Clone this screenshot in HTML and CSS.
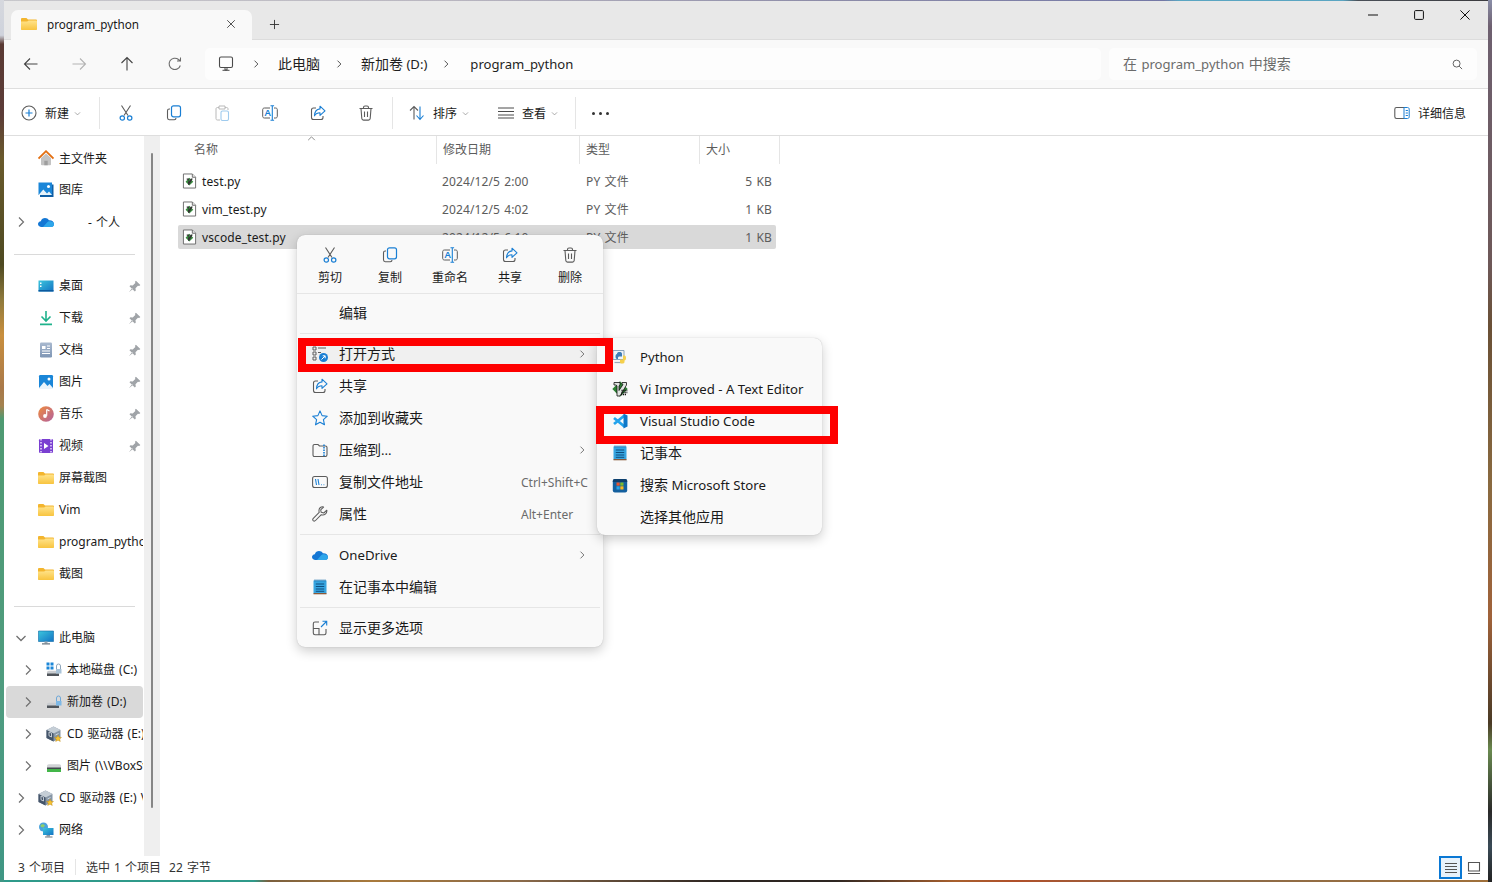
FILE: index.html
```html
<!DOCTYPE html>
<html lang="zh-CN">
<head>
    <meta charset="UTF-8">
    <title>program_python - File Explorer</title>
    <link rel="stylesheet" href="styles.css">
</head>
<body>
    <!-- shared icons -->
    <svg class="defs" aria-hidden="true">
        <defs>
            <linearGradient id="g-folder" x1="0" y1="0" x2="0" y2="1"><stop offset="0" stop-color="#ffe38a"/><stop offset="1" stop-color="#f8c43f"/></linearGradient>
            <linearGradient id="g-screen" x1="0" y1="0" x2="1" y2="1"><stop offset="0" stop-color="#3cc6dd"/><stop offset="1" stop-color="#1273c4"/></linearGradient>
            <linearGradient id="g-music" x1="0" y1="0" x2="1" y2="1"><stop offset="0" stop-color="#ef8b3c"/><stop offset="1" stop-color="#b2609f"/></linearGradient>
            <linearGradient id="g-doc" x1="0" y1="0" x2="0" y2="1"><stop offset="0" stop-color="#a9b9cf"/><stop offset="1" stop-color="#7f96b5"/></linearGradient>

            <symbol id="i-folder" viewBox="0 0 16 16"><path d="M0 3.2C0 2.5.5 2 1.2 2h4.2l1.6 1.6h7.8c.7 0 1.2.5 1.2 1.2v8c0 .7-.5 1.2-1.2 1.2H1.2C.5 14 0 13.5 0 12.8z" fill="#f3b52e"/><path d="M0 5.6h6.2L7.6 4.6h7.2c.7 0 1.2.5 1.2 1.2v7c0 .7-.5 1.2-1.2 1.2H1.2C.5 14 0 13.5 0 12.8z" fill="url(#g-folder)"/></symbol>
            <symbol id="i-chev-r" viewBox="0 0 16 16"><path d="M6 3.500 10.500 8 6 12.500" fill="none" stroke="currentColor" stroke-width="1.200"/></symbol>
            <symbol id="i-chev-d" viewBox="0 0 16 16"><path d="M3.500 6 8 10.500 12.500 6" fill="none" stroke="currentColor" stroke-width="1.300"/></symbol>
            <symbol id="i-pin" viewBox="0 0 16 16"><path d="M9.800 .8 15.200 6.200 13.800 7.400 12.200 7 9.200 10.200 9.600 13 8.400 14.200 1.800 7.600 3 6.400 5.800 6.800 9 3.800 8.600 2.200z M5 10 1 15 6 11z" fill="#a0a4a8"/></symbol>

            <symbol id="i-cut" viewBox="0 0 16 16"><path d="M3.500 .5 10 10.500M12.500 .5 6 10.500" fill="none" stroke="#5c5c5c" stroke-width="1.100"/><circle cx="4.300" cy="13" r="2.200" fill="none" stroke="#1a7fd4" stroke-width="1.200"/><circle cx="11.700" cy="13" r="2.200" fill="none" stroke="#1a7fd4" stroke-width="1.200"/></symbol>
            <symbol id="i-copy" viewBox="0 0 16 16"><path d="M4 4H3.200C2 4 1.500 4.800 1.500 5.800v7C1.500 14 2.300 14.700 3.300 14.700h5c1 0 1.700-.6 1.700-1.700" fill="none" stroke="#5c5c5c" stroke-width="1.100"/><rect x="5.500" y=".8" width="9" height="11" rx="2" fill="none" stroke="#1a7fd4" stroke-width="1.200"/></symbol>
            <symbol id="i-paste" viewBox="0 0 16 16"><path d="M5 2.500H3.500C2.500 2.500 2 3 2 4v9.500c0 1 .5 1.500 1.500 1.500H6M5 1h6v3H5zM11 2.500h1.500c1 0 1.500.5 1.500 1.500v1" fill="none" stroke="#b9b9b9" stroke-width="1"/><rect x="7" y="6" width="7.500" height="9.500" rx="1.500" fill="none" stroke="#9fcbee" stroke-width="1.100"/></symbol>
            <symbol id="i-rename" viewBox="0 0 16 16"><path d="M8 3H2.500C1.300 3 .7 3.700 .7 4.500v7c0 .8.600 1.500 1.800 1.500H8M12 3h1.500c1.200 0 1.800.7 1.800 1.500v7c0 .8-.6 1.500-1.800 1.500H12" fill="none" stroke="#5c5c5c" stroke-width="1"/><path d="M8.500 .8h3.600M10.300 .8v14.400M8.500 15.200h3.600" fill="none" stroke="#1a7fd4" stroke-width="1.100"/><text x="2.600" y="11" class="svg-letter">A</text></symbol>
            <symbol id="i-share" viewBox="0 0 16 16"><path d="M6 3H3.500C2.300 3 1.500 3.800 1.500 5v7.500c0 1.200.8 2 2 2H11c1.200 0 2-.8 2-2V11" fill="none" stroke="#5c5c5c" stroke-width="1.100"/><path d="M10 1.200 15 5.800 10 10.300V7.700C7.500 7.700 5.800 8.500 4.500 10.800 4.700 7 6.500 4.200 10 3.900z" fill="none" stroke="#1a7fd4" stroke-width="1.100" stroke-linejoin="round"/></symbol>
            <symbol id="i-trash" viewBox="0 0 16 16"><path d="M1.500 3.500h13M5.500 3.500V2.500C5.500 1.500 6.200 1 7 1h2c.8 0 1.500.5 1.500 1.500v1M3 3.500l.8 10c.1 1 .8 1.600 1.700 1.600h5c.9 0 1.600-.6 1.700-1.600l.8-10M6.500 6.500v5.500M9.500 6.500v5.500" fill="none" stroke="#5c5c5c" stroke-width="1.100"/></symbol>
            <symbol id="i-new" viewBox="0 0 16 16"><circle cx="8" cy="8" r="7" fill="none" stroke="#5c5c5c" stroke-width="1.100"/><path d="M8 4.500v7M4.500 8h7" stroke="#1a7fd4" stroke-width="1.200"/></symbol>
            <symbol id="i-sort" viewBox="0 0 16 16"><path d="M5 14.500V1.500M1 5.500l4-4 4 4" fill="none" stroke="#5c5c5c" stroke-width="1.100"/><path d="M11 1.500v13M7.500 10.500l3.500 4 3.500-4" fill="none" stroke="#1a7fd4" stroke-width="1.100"/></symbol>
            <symbol id="i-view" viewBox="0 0 16 16"><path d="M0 3h16M0 6.500h16M0 10h16M0 13h16" stroke="#4a4a4a" stroke-width="1"/></symbol>
            <symbol id="i-details" viewBox="0 0 16 16"><path d="M10 2.500H2.500C1.500 2.500 .8 3.200 .8 4.200v7.600c0 1 .7 1.700 1.700 1.700H10" fill="none" stroke="#5c5c5c" stroke-width="1.100"/><path d="M10 2.500h3.500c1 0 1.700.7 1.700 1.700v7.600c0 1-.7 1.700-1.700 1.700H10zM11.700 5.500h2.200M11.700 8h2.200M11.700 10.500h2.200" fill="none" stroke="#1a7fd4" stroke-width="1"/></symbol>

            <symbol id="i-openwith" viewBox="0 0 16 16"><path d="M1 1h3v3H1zM1 6h3v3H1zM1 11h3v3H1zM6 2h8M6 6.500h3" fill="none" stroke="#5c5c5c" stroke-width="1"/><circle cx="11.500" cy="11.500" r="4.500" fill="#1a7fd4"/><path d="M9.500 13.500l3.500-3.500M10.700 9.800h2.500v2.500" fill="none" stroke="#fff" stroke-width="1"/></symbol>
            <symbol id="i-star" viewBox="0 0 16 16"><path d="M8 .9 10.100 5.600 15.300 6.200 11.400 9.700 12.500 14.800 8 12.200 3.500 14.800 4.600 9.700 .7 6.200 5.900 5.600z" fill="none" stroke="#1a7fd4" stroke-width="1.100" stroke-linejoin="round"/></symbol>
            <symbol id="i-zip" viewBox="0 0 16 16"><path d="M1 4.200C1 3 1.600 2.500 2.500 2.500H6l1.500 1.500h6c1 0 1.500.6 1.500 1.500v7.300c0 1-.6 1.700-1.500 1.700h-11C1.600 14.500 1 13.800 1 12.800z" fill="none" stroke="#5c5c5c" stroke-width="1.100"/><path d="M12 2.500v12" stroke="#1a7fd4" stroke-width="1.600" stroke-dasharray="1.500 1"/></symbol>
            <symbol id="i-path" viewBox="0 0 16 16"><rect x=".6" y="2.500" width="14.800" height="11" rx="2" fill="none" stroke="#5c5c5c" stroke-width="1.100"/><path d="M3.500 5 4.500 11M6 5 7 11M9 10.800h.8M11.500 10.800h.8" fill="none" stroke="#1a7fd4" stroke-width="1.100"/></symbol>
            <symbol id="i-wrench" viewBox="0 0 16 16"><path d="M14.800 4.200 11.800 7 9.200 6.300 8.700 3.800 11.600 1c-2.300-.7-4.800.8-4.600 4 0 .5.100 1 .2 1.400L1.300 12.300c-.7.700-.7 1.600-.1 2.300.7.600 1.600.6 2.300-.1l5.800-5.800c2.900 1 6-1.200 5.500-4.500z" fill="none" stroke="#5c5c5c" stroke-width="1.050" stroke-linejoin="round"/></symbol>
            <symbol id="i-cloud" viewBox="0 0 16 16"><path d="M3.400 13C1.500 13 0 11.800 0 10.100 0 8.500 1.200 7.400 2.800 7.200 3.500 5.200 5.100 4 7 4c1.700 0 3.100.9 3.900 2.300 2.800-.3 5.100 1.400 5.100 3.700 0 1.800-1.300 3-3.200 3z" fill="#1477d4"/><path d="M5 13 9 8.500c1-1.200 2.600-1.500 4.200-1 1.700.5 2.800 1.500 2.800 2.900 0 1.500-1.200 2.600-3.200 2.600z" fill="#2ea6ea"/></symbol>
            <symbol id="i-notepad" viewBox="0 0 16 16"><path d="M1.500 1.500h13v13h-13z" fill="#37a5e0"/><path d="M1.500 14h13v1.300h-13z" fill="#8a5a3a"/><path d="M3 .5v2M5 .5v2M7 .5v2M9 .5v2M11 .5v2M13 .5v2" stroke="#1b6ca8" stroke-width="1"/><path d="M3.800 5h8.400M3.800 7.500h8.400M3.800 10h8.400M3.800 12.300h8.400" stroke="#0e4f80" stroke-width="1"/></symbol>
            <symbol id="i-more" viewBox="0 0 16 16"><path d="M7 2H3C2 2 1.300 2.700 1.300 3.700V13c0 1 .7 1.700 1.700 1.700h9.300c1 0 1.700-.7 1.700-1.700V9M1.300 8.500H7V14.700" fill="none" stroke="#5c5c5c" stroke-width="1.100"/><path d="M9 7l5.500-5.500M10.500 1.300h4.200v4.200" fill="none" stroke="#1a7fd4" stroke-width="1.100"/></symbol>

            <symbol id="i-python" viewBox="0 0 16 16"><path d="M1 1.500h11v9H1z" fill="#eef3f8" stroke="#8aa3bb" stroke-width="1"/><path d="M2.500 13.500h8" stroke="#9ab" stroke-width="1.200"/><path d="M5 5c0-1.500 1-2 2.500-2s2.500.5 2.500 1.800V7.500H7.500c-1 0-1.500.5-1.500 1.500v1H5C4 10 3.500 9 3.500 7.500S4 5 5 5z" fill="#3f7cb5"/><path d="M11 6.500h1.500c1 0 1.500 1 1.500 2.500s-.5 2.500-1.500 2.500v1.500c0 1-1 1.500-2.500 1.500S8 14 8 13v-2.500h2.500c.5 0 .5-.5.500-1z" fill="#f5d04d"/></symbol>
            <symbol id="i-vim" viewBox="0 0 16 16"><path d="M8 .3 15.700 8 8 15.700.3 8z" fill="#2c7f33"/><path d="M2 1.500h6v2.500L7 4.800v4.700L11 3.500 10 2.800V1.500h4.500v2.500l-6.500 11H5V4.800L4 4H2z" fill="#e2e5e2" stroke="#111" stroke-width=".8"/><path d="M9.500 9.500h6M9.500 11.500h6M9 13.500h5" stroke="#111" stroke-width="1.300" stroke-dasharray="1.200 .7"/></symbol>
            <symbol id="i-vscode" viewBox="0 0 16 16"><path d="M12.500 2.500 2 11M2 5l10.500 8.500" fill="none" stroke="#24a3ec" stroke-width="2.800"/><path d="M11.500 .6 15.500 2.500V13.500L11.500 15.400z" fill="#0f78c8"/></symbol>
            <symbol id="i-store" viewBox="0 0 16 16"><rect x=".8" y="2" width="14.400" height="13.400" rx="2" fill="#14609f"/><path d="M.8 4C.8 2.800 1.600 2 2.800 2h10.400c1.200 0 2 .8 2 2v1H.8z" fill="#0e3f6d"/><path d="M4.500 5.500h3.200v3.200H4.500z" fill="#e9552e"/><path d="M8.300 5.500h3.200v3.200H8.300z" fill="#7fba2a"/><path d="M4.500 9.300h3.200v3.200H4.500z" fill="#29a5e6"/><path d="M8.300 9.300h3.200v3.200H8.300z" fill="#fbb81e"/></symbol>

            <symbol id="i-home" viewBox="0 0 16 16"><path d="M3 8v6.500C3 15 3.400 15.300 4 15.300h8c.6 0 1-.3 1-.8V8L8 3.500z" fill="#c3c3c3"/><path d="M6.300 15.300v-4.500h3.400v4.500z" fill="#9e9e9e"/><path d="M.5 8.500 8 1.200l7.500 7.300" fill="none" stroke="#e36f12" stroke-width="1.800"/></symbol>
            <symbol id="i-gallery" viewBox="0 0 16 16"><path d="M.5.500h13.500v12.500H.5z" fill="#1a86d8"/><path d="M.5 13 5.300 7.500 9 11.500 11 9.500l3 3.500z" fill="#e6f3fb"/><circle cx="10.500" cy="4.500" r="1.500" fill="#fff"/><path d="M2 13v2h13.500V2.500H14V13z" fill="#0f5ea4"/></symbol>
            <symbol id="i-desktop" viewBox="0 0 16 16"><path d="M.5 2.500h15v11H.5z" fill="url(#g-screen)"/><path d="M.5 12h15v1.500H.5z" fill="#0c5a9e"/><path d="M2 4.500h1.500V6H2zM2 7.500h1.500V9H2z" fill="#fff"/></symbol>
            <symbol id="i-download" viewBox="0 0 16 16"><path d="M8 1v9M3.500 6.500 8 11l4.500-4.500" fill="none" stroke="#1fb28c" stroke-width="1.600"/><path d="M2 14.300h12" stroke="#1fb28c" stroke-width="1.700"/></symbol>
            <symbol id="i-docs" viewBox="0 0 16 16"><rect x="2" y=".5" width="12" height="15" rx="1.200" fill="url(#g-doc)"/><path d="M4 4h3.500v3H4z" fill="#fff"/><path d="M9 4h3M9 6.500h3M4 9h8M4 11.500h8" stroke="#fff" stroke-width="1"/></symbol>
            <symbol id="i-pictures" viewBox="0 0 16 16"><rect x="1" y="1" width="14" height="14" rx="1.200" fill="#1a86d8"/><path d="M1 14 6 8l3.500 4 2-2 3.500 4v1H1z" fill="#e9f4fb"/><circle cx="11" cy="5" r="1.500" fill="#fff"/></symbol>
            <symbol id="i-music" viewBox="0 0 16 16"><circle cx="8" cy="8" r="7.800" fill="url(#g-music)"/><path d="M8.700 3.500v6.200" stroke="#fff" stroke-width="1.200"/><path d="M8.700 3.500 11.500 5" stroke="#fff" stroke-width="1.200"/><circle cx="7" cy="10" r="1.900" fill="#fff"/></symbol>
            <symbol id="i-video" viewBox="0 0 16 16"><rect x="1" y="1" width="14" height="14" rx="1.200" fill="#7a3fd1"/><path d="M3 1v14M13 1v14" stroke="#ceb6f2" stroke-width="2" stroke-dasharray="1.500 1.500"/><path d="M6 5v6l4.500-3z" fill="#fff"/></symbol>
            <symbol id="i-pc" viewBox="0 0 16 16"><path d="M.5 1h15v10.500H.5z" fill="url(#g-screen)"/><path d="M.5 1h15v10.500H.5z" fill="none" stroke="#0f6aa6" stroke-width=".6"/><path d="M6.500 11.500h3v2h-3z" fill="#9aa7b2"/><path d="M4 13.800h8" stroke="#6a7782" stroke-width="1.300"/></symbol>
            <symbol id="i-drive-c" viewBox="0 0 16 16"><path d="M.5 .5h3v3h-3zM4.500 .5h3v3h-3zM.5 4.500h3v3h-3zM4.500 4.500h3v3h-3z" fill="#1a86d8"/><path d="M1 10.500c0-1 .8-1.700 1.700-1.700h8.600c.9 0 1.700.7 1.700 1.700v1.500H1z" fill="#c9ccd0"/><path d="M1 11.500h12v2.500H1z" fill="#4f545a"/><path d="M10.500 8V4a2 2 0 0 1 4 0v4" fill="none" stroke="#8fa6ba" stroke-width="1"/><rect x="10" y="7" width="5.500" height="4.500" fill="#a9c3d8"/></symbol>
            <symbol id="i-drive-d" viewBox="0 0 16 16"><path d="M1 10.500c0-1 .8-1.700 1.700-1.700h8.600c.9 0 1.700.7 1.700 1.700v1.500H1z" fill="#c9ccd0"/><path d="M1 11.500h12v2.500H1z" fill="#4f545a"/><path d="M10.500 8V4a2 2 0 0 1 4 0v4" fill="none" stroke="#6fa8d8" stroke-width="1"/><rect x="10" y="7" width="5.500" height="4.500" fill="#7db8e6"/></symbol>
            <symbol id="i-cube" viewBox="0 0 16 16"><path d="M7.500.5 14.500 4v8L7.500 15.500.5 12V4z" fill="#8796a6"/><path d="M7.500.5 14.500 4 7.500 7.500.5 4z" fill="#c5ced6"/><path d="M7.500 7.500V15.500L.5 12V4z" fill="#45556a"/><path d="M3 6l2.500 1.200V11L3 9.800zM9.500 9l3-1.500" stroke="#dfe5ea" stroke-width=".8" fill="none"/><path d="M12 9 13 11.300 15.500 11.500 13.700 13 14.300 15.500 12 14.200 9.700 15.500 10.300 13 8.500 11.500 11 11.300z" fill="#f7c22e" stroke="#b5851a" stroke-width=".4"/></symbol>
            <symbol id="i-netdrive" viewBox="0 0 16 16"><path d="M1 8c0-1 .8-1.700 1.700-1.700h10.600c.9 0 1.700.7 1.700 1.700v2H1z" fill="#d0d2d5"/><path d="M1 9.500h14v1.500H1z" fill="#43484e"/><path d="M1 11h14v3H1z" fill="#43b649"/></symbol>
            <symbol id="i-net" viewBox="0 0 16 16"><circle cx="5.500" cy="5" r="4.500" fill="#4aa3dc"/><path d="M2.500 3 5 2l2 1.500-1.500 2L3 5z" fill="#8fcf6a"/><path d="M5 6h10.500v7H5z" fill="url(#g-screen)"/><path d="M8.500 13h3.500v1.500H8.500z" fill="#8b98a3"/><path d="M7 15h7.500" stroke="#6a7782" stroke-width="1"/></symbol>
            <symbol id="i-pyfile" viewBox="0 0 16 16"><path d="M1.500 .5h9.500l3.500 3.500v11.500h-13z" fill="#fff" stroke="#6a6a6a" stroke-width="1"/><path d="M11 .5V4h3.500" fill="#e8e8e8" stroke="#6a6a6a" stroke-width="1"/><path d="M7.800 4.500 12 8.700 7.800 12.700 3.800 8.700z" fill="#3a8a40"/><path d="M5 5.200h2.500v1.200L7 6.800v2.500L9.600 5.200h1.600v1L7.600 12H6.400V6.800L5 6.300z" fill="#333"/></symbol>
            <symbol id="i-monitor" viewBox="0 0 16 16"><rect x="1.500" y="1" width="13" height="10.500" rx="1.500" fill="none" stroke="#4a4a4a" stroke-width="1.100"/><path d="M7 11.500h2v2.500H7zM4.500 14.300h7" fill="none" stroke="#4a4a4a" stroke-width="1"/></symbol>
        </defs>
    </svg>

    <div class="window">
        <div class="tabbar">
            <div class="tab">
                <svg class="ico"><use href="#i-folder"/></svg>
                <span class="tab-title">program_python</span>
                <svg class="tab-close" viewBox="0 0 12 12"><path d="M1.500 1.500l9 9M10.500 1.500l-9 9" stroke="#333" stroke-width="1"/></svg>
            </div>
            <svg class="tab-add" viewBox="0 0 12 12"><path d="M6 1v10M1 6h10" stroke="#333" stroke-width="1"/></svg>
            <div class="winctrl">
                <svg class="winbtn" viewBox="0 0 12 12"><path d="M0 6h12" stroke="#111" stroke-width="1.200"/></svg>
                <svg class="winbtn" viewBox="0 0 12 12"><rect x=".7" y=".7" width="10.600" height="10.600" rx="1.200" fill="none" stroke="#111" stroke-width="1.200"/></svg>
                <svg class="winbtn" viewBox="0 0 12 12"><path d="M.5.5l11 11M11.500.5l-11 11" stroke="#111" stroke-width="1.200"/></svg>
            </div>
        </div>

        <div class="navbar">
            <div class="nav-btns">
                <svg class="ico" viewBox="0 0 16 16"><path d="M14.500 8h-13M7 2.500 1.500 8 7 13.500" fill="none" stroke="#444" stroke-width="1.100"/></svg>
                <svg class="ico" viewBox="0 0 16 16"><path d="M1.500 8h13M9 2.500 14.500 8 9 13.500" fill="none" stroke="#b4b4b4" stroke-width="1.100"/></svg>
                <svg class="ico" viewBox="0 0 16 16"><path d="M8 14.500v-13M2.500 7 8 1.500 13.500 7" fill="none" stroke="#444" stroke-width="1.100"/></svg>
                <svg class="ico" viewBox="0 0 16 16"><path d="M13.300 9.500A5.700 5.700 0 1 1 11.500 3.500L13.500 5M13.500 1.500V5H10" fill="none" stroke="#6a6a6a" stroke-width="1.050"/></svg>
            </div>
            <div class="address">
                <svg class="ico"><use href="#i-monitor"/></svg>
                <svg class="crumb-chev crumb-first"><use href="#i-chev-r"/></svg>
                <span class="zh">此电脑</span>
                <svg class="crumb-chev"><use href="#i-chev-r"/></svg>
                <span class="mix"><span class="zh">新加卷</span> (D:)</span>
                <svg class="crumb-chev"><use href="#i-chev-r"/></svg>
                <span class="crumb-last">program_python</span>
            </div>
            <div class="search">
                <span class="mix"><span class="zh">在</span> program_python <span class="zh">中搜索</span></span>
                <svg class="search-ico" viewBox="0 0 12 12"><circle cx="5" cy="5" r="3.800" fill="none" stroke="#555" stroke-width="1"/><path d="M7.800 7.800 11 11" stroke="#555" stroke-width="1"/></svg>
            </div>
        </div>

        <div class="toolbar">
            <div class="tb-text tb-new">
                <svg class="ico"><use href="#i-new"/></svg>
                <span>新建</span>
                <svg class="tb-chev"><use href="#i-chev-d"/></svg>
            </div>
            <div class="tb-sep"></div>
            <div class="tb-icon tb-first"><svg class="ico"><use href="#i-cut"/></svg></div>
            <div class="tb-icon"><svg class="ico"><use href="#i-copy"/></svg></div>
            <div class="tb-icon"><svg class="ico"><use href="#i-paste"/></svg></div>
            <div class="tb-icon"><svg class="ico"><use href="#i-rename"/></svg></div>
            <div class="tb-icon"><svg class="ico"><use href="#i-share"/></svg></div>
            <div class="tb-icon tb-last"><svg class="ico"><use href="#i-trash"/></svg></div>
            <div class="tb-sep"></div>
            <div class="tb-text tb-sort">
                <svg class="ico"><use href="#i-sort"/></svg>
                <span>排序</span>
                <svg class="tb-chev"><use href="#i-chev-d"/></svg>
            </div>
            <div class="tb-text tb-view">
                <svg class="ico"><use href="#i-view"/></svg>
                <span>查看</span>
                <svg class="tb-chev"><use href="#i-chev-d"/></svg>
            </div>
            <div class="tb-sep"></div>
            <div class="tb-dots"><i></i><i></i><i></i></div>
            <div class="tb-text tb-details">
                <svg class="ico"><use href="#i-details"/></svg>
                <span>详细信息</span>
            </div>
        </div>

        <div class="content">
            <nav class="sidebar">
                <div class="side-list">
                    <div class="side-row"><span class="chev"></span><svg class="ico"><use href="#i-home"/></svg><span class="side-label side-home">主文件夹</span></div>
                    <div class="side-row"><span class="chev"></span><svg class="ico"><use href="#i-gallery"/></svg><span class="side-label">图库</span></div>
                    <div class="side-row"><svg class="chev"><use href="#i-chev-r"/></svg><svg class="ico"><use href="#i-cloud"/></svg><span class="side-label side-cloud">- 个人</span></div>
                    <div class="side-sep"></div>
                    <div class="side-row"><span class="chev"></span><svg class="ico"><use href="#i-desktop"/></svg><span class="side-label">桌面</span><svg class="pin"><use href="#i-pin"/></svg></div>
                    <div class="side-row"><span class="chev"></span><svg class="ico"><use href="#i-download"/></svg><span class="side-label">下载</span><svg class="pin"><use href="#i-pin"/></svg></div>
                    <div class="side-row"><span class="chev"></span><svg class="ico"><use href="#i-docs"/></svg><span class="side-label">文档</span><svg class="pin"><use href="#i-pin"/></svg></div>
                    <div class="side-row"><span class="chev"></span><svg class="ico"><use href="#i-pictures"/></svg><span class="side-label">图片</span><svg class="pin"><use href="#i-pin"/></svg></div>
                    <div class="side-row"><span class="chev"></span><svg class="ico"><use href="#i-music"/></svg><span class="side-label">音乐</span><svg class="pin"><use href="#i-pin"/></svg></div>
                    <div class="side-row"><span class="chev"></span><svg class="ico"><use href="#i-video"/></svg><span class="side-label">视频</span><svg class="pin"><use href="#i-pin"/></svg></div>
                    <div class="side-row"><span class="chev"></span><svg class="ico"><use href="#i-folder"/></svg><span class="side-label">屏幕截图</span></div>
                    <div class="side-row"><span class="chev"></span><svg class="ico"><use href="#i-folder"/></svg><span class="side-label">Vim</span></div>
                    <div class="side-row"><span class="chev"></span><svg class="ico"><use href="#i-folder"/></svg><span class="side-label">program_python</span></div>
                    <div class="side-row"><span class="chev"></span><svg class="ico"><use href="#i-folder"/></svg><span class="side-label">截图</span></div>
                    <div class="side-sep"></div>
                    <div class="side-row"><svg class="chev"><use href="#i-chev-d"/></svg><svg class="ico"><use href="#i-pc"/></svg><span class="side-label">此电脑</span></div>
                    <div class="side-row sub"><svg class="chev"><use href="#i-chev-r"/></svg><svg class="ico"><use href="#i-drive-c"/></svg><span class="side-label">本地磁盘 (C:)</span></div>
                    <div class="side-row sub active"><svg class="chev"><use href="#i-chev-r"/></svg><svg class="ico"><use href="#i-drive-d"/></svg><span class="side-label">新加卷 (D:)</span></div>
                    <div class="side-row sub"><svg class="chev"><use href="#i-chev-r"/></svg><svg class="ico"><use href="#i-cube"/></svg><span class="side-label">CD 驱动器 (E:)</span></div>
                    <div class="side-row sub"><svg class="chev"><use href="#i-chev-r"/></svg><svg class="ico"><use href="#i-netdrive"/></svg><span class="side-label">图片 (\\VBoxSvr)</span></div>
                    <div class="side-row"><svg class="chev"><use href="#i-chev-r"/></svg><svg class="ico"><use href="#i-cube"/></svg><span class="side-label">CD 驱动器 (E:) VirtualBox</span></div>
                    <div class="side-row"><svg class="chev"><use href="#i-chev-r"/></svg><svg class="ico"><use href="#i-net"/></svg><span class="side-label">网络</span></div>
                </div>
                <div class="side-track"><div class="side-thumb"></div></div>
            </nav>

            <main class="files">
                <div class="file-head">
                    <div class="col-name">名称<svg class="sort-caret" viewBox="0 0 10 6"><path d="M1 5 5 1l4 4" fill="none" stroke="#777" stroke-width="1"/></svg></div>
                    <div class="col-date">修改日期</div>
                    <div class="col-type">类型</div>
                    <div class="col-size">大小</div>
                </div>
                <div class="file-row">
                    <div class="file-name"><svg class="ico"><use href="#i-pyfile"/></svg>test.py</div>
                    <div class="file-meta">2024/12/5 2:00</div>
                    <div class="file-meta">PY 文件</div>
                    <div class="file-meta file-size">5 KB</div>
                </div>
                <div class="file-row">
                    <div class="file-name"><svg class="ico"><use href="#i-pyfile"/></svg>vim_test.py</div>
                    <div class="file-meta">2024/12/5 4:02</div>
                    <div class="file-meta">PY 文件</div>
                    <div class="file-meta file-size">1 KB</div>
                </div>
                <div class="file-row selected">
                    <div class="file-name"><svg class="ico"><use href="#i-pyfile"/></svg>vscode_test.py</div>
                    <div class="file-meta">2024/12/5 6:10</div>
                    <div class="file-meta">PY 文件</div>
                    <div class="file-meta file-size">1 KB</div>
                </div>
            </main>
        </div>

        <div class="statusbar">
            <span>3 个项目</span>
            <span class="st-sep"></span>
            <span class="st-sel">选中 1 个项目</span>
            <span>22 字节</span>
            <div class="st-views">
                <div class="st-view on"><svg class="ico" viewBox="0 0 16 16"><path d="M2 3.500h12M2 6.500h12M2 9.500h12M2 12.500h12" stroke="#555" stroke-width="1.100"/></svg></div>
                <div class="st-view"><svg class="ico" viewBox="0 0 16 16"><path d="M2.500 2.500h11v8.500h-11zM2 13.500h12" fill="none" stroke="#555" stroke-width="1.100"/></svg></div>
            </div>
        </div>
    </div>

    <!-- context menu -->
    <div class="menu main-menu">
        <div class="menu-tools">
            <div class="menu-tool"><svg class="ico"><use href="#i-cut"/></svg><span>剪切</span></div>
            <div class="menu-tool"><svg class="ico"><use href="#i-copy"/></svg><span>复制</span></div>
            <div class="menu-tool"><svg class="ico"><use href="#i-rename"/></svg><span>重命名</span></div>
            <div class="menu-tool"><svg class="ico"><use href="#i-share"/></svg><span>共享</span></div>
            <div class="menu-tool"><svg class="ico"><use href="#i-trash"/></svg><span>删除</span></div>
        </div>
        <div class="menu-item first"><span class="m-ico"></span><span class="zh">编辑</span></div>
        <div class="menu-sep"></div>
        <div class="menu-item hover"><svg class="ico m-ico"><use href="#i-openwith"/></svg><span class="zh">打开方式</span><svg class="m-chev"><use href="#i-chev-r"/></svg></div>
        <div class="menu-item"><svg class="ico m-ico"><use href="#i-share"/></svg><span class="zh">共享</span></div>
        <div class="menu-item"><svg class="ico m-ico"><use href="#i-star"/></svg><span class="zh">添加到收藏夹</span></div>
        <div class="menu-item"><svg class="ico m-ico"><use href="#i-zip"/></svg><span class="mix"><span class="zh">压缩到</span>...</span><svg class="m-chev"><use href="#i-chev-r"/></svg></div>
        <div class="menu-item"><svg class="ico m-ico"><use href="#i-path"/></svg><span class="zh">复制文件地址</span><span class="m-key">Ctrl+Shift+C</span></div>
        <div class="menu-item"><svg class="ico m-ico"><use href="#i-wrench"/></svg><span class="zh">属性</span><span class="m-key">Alt+Enter</span></div>
        <div class="menu-sep"></div>
        <div class="menu-item"><svg class="ico m-ico"><use href="#i-cloud"/></svg><span>OneDrive</span><svg class="m-chev"><use href="#i-chev-r"/></svg></div>
        <div class="menu-item"><svg class="ico m-ico"><use href="#i-notepad"/></svg><span class="zh">在记事本中编辑</span></div>
        <div class="menu-sep"></div>
        <div class="menu-item"><svg class="ico m-ico"><use href="#i-more"/></svg><span class="zh">显示更多选项</span></div>
    </div>

    <div class="menu sub-menu">
        <div class="menu-item"><svg class="ico m-ico"><use href="#i-python"/></svg><span>Python</span></div>
        <div class="menu-item"><svg class="ico m-ico"><use href="#i-vim"/></svg><span>Vi Improved - A Text Editor</span></div>
        <div class="menu-item"><svg class="ico m-ico"><use href="#i-vscode"/></svg><span>Visual Studio Code</span></div>
        <div class="menu-item"><svg class="ico m-ico"><use href="#i-notepad"/></svg><span class="zh">记事本</span></div>
        <div class="menu-item"><svg class="ico m-ico"><use href="#i-store"/></svg><span class="mix"><span class="zh">搜索</span> Microsoft Store</span></div>
        <div class="menu-item"><span class="m-ico"></span><span class="zh">选择其他应用</span></div>
    </div>

    <!-- red annotation boxes -->
    <div class="mark mark-open"></div>
    <div class="mark mark-code"></div>
</body>
</html>
```

FILE: styles.css
```css
/* General */
html, body {
    margin: 0;
    height: 100%;
    overflow: hidden;
}

body {
    box-sizing: border-box;
    width: 1492px;
    height: 882px;
    padding: 1px 4px 2px;
    position: relative;
    font-family: "Noto Sans", "Noto Sans CJK SC", sans-serif;
    font-size: 12px;
    word-spacing: 1px;
    color: #1a1a1a;
    /* wallpaper showing round the window: left, right, top, bottom edges */
    background:
        linear-gradient(#d6d8de, #cfd3dc 4%, #5a3a34 5%, #5c3c38 13%, #6a5a2c 18%, #4e4a22 30%, #8f7a3c 34%, #c98f3e 38%, #a9794a 44%, #a4824f 46%, #4f9a72 47.5%, #4f9c80 80%, #3f9684 100%) left top / 4px 100% no-repeat,
        linear-gradient(#8a8ea8, #6e6070 3%, #6e5858 30%, #6a5036 37%, #8a6a40 55%, #a0623a 70%, #4a3a26 82%, #6a8a50 85%, #2a2a2a 92%, #3a4a56 96%, #222 100%) right top / 4px 100% no-repeat,
        linear-gradient(90deg, #c8c8cc, #b9b6c0 30%, #8d8ca8 55%, #7478a6 78%, #5aa5c2 79%, #5aa5c2 90%, #4a5058 91%, #3a3a3e) left top / 100% 1px no-repeat,
        linear-gradient(90deg, #2f9a8a 17%, #7a5f3e 18%, #a97a3c 25%, #8a6a4a 35%, #2e2622 48%, #2e2622 56%, #a8602e 64%, #b0502a 68%, #8a6a4a 80%, #a0703a 100%) left bottom / 100% 2px no-repeat,
        #6a5a40;
}

.defs {
    position: absolute;
    width: 0;
    height: 0;
}

.svg-letter {
    font-family: "Noto Sans", sans-serif;
    font-size: 9.5px;
    font-weight: 600;
    fill: #1a7fd4;
}

.ico {
    width: 16px;
    height: 16px;
    flex: none;
}

/* Chinese runs are set a touch larger than the Latin ones, as in Segoe UI + YaHei */
.zh {
    font-size: 14px;
}

.address > .zh, .menu-item > .zh, .mix {
    padding-bottom: 2px;
}

.window {
    display: flex;
    flex-direction: column;
    height: 879px;
    background: #fff;
}

/* Title bar and tab */
.tabbar {
    display: flex;
    align-items: flex-end;
    flex: none;
    height: 39px;
    background: #e8e8e8;
    border-bottom: 1px solid #dcdcdc;
    box-sizing: border-box;
}

.tab {
    display: flex;
    align-items: center;
    width: 241px;
    height: 30px;
    margin-left: 7px;
    margin-bottom: -1px;
    padding: 0 16px 2px 10px;
    box-sizing: border-box;
    background: #f9f9f9;
    border-radius: 7px 7px 0 0;
}

.tab-title {
    margin-left: 10px;
    flex: 1;
    font-size: 11.7px;
}

.tab-close {
    width: 10px;
    height: 10px;
}

.tab-add {
    width: 11px;
    height: 11px;
    margin: 0 0 9px 17px;
}

.winctrl {
    display: flex;
    align-self: flex-start;
    gap: 36px;
    margin: 9px 18px 0 auto;
}

.winbtn {
    width: 10px;
    height: 10px;
}

/* Navigation bar */
.navbar {
    display: flex;
    align-items: center;
    flex: none;
    height: 49px;
    background: #f9f9f9;
    border-bottom: 1px solid #dedede;
    box-sizing: border-box;
}

.nav-btns {
    display: flex;
    gap: 32px;
    margin-left: 19px;
    width: 182px;
}

.address, .search {
    display: flex;
    align-items: center;
    height: 32px;
    background: #fdfdfd;
    border-radius: 5px;
    font-size: 13.1px;
}

.address {
    width: 896px;
    padding-left: 13px;
    box-sizing: border-box;
    color: #1f1f1f;
    word-spacing: 0;
}

.crumb-chev {
    width: 12px;
    height: 12px;
    margin: 0 16px 0 13px;
    color: #444;
}

.crumb-chev.crumb-first {
    margin-left: 16px;
}

.crumb-last {
    margin-left: 2px;
}

.search {
    justify-content: space-between;
    width: 368px;
    margin-left: 8px;
    padding: 0 14px;
    box-sizing: border-box;
    color: #6b6b6b;
}

.search-ico {
    width: 11px;
    height: 11px;
}

/* Command bar */
.toolbar {
    display: flex;
    align-items: center;
    flex: none;
    height: 47px;
    padding: 2px 0 0 17px;
    border-bottom: 1px solid #dedede;
    box-sizing: border-box;
}

.tb-text {
    display: flex;
    align-items: center;
}

.tb-new {
    width: 78px;
}

.tb-new span, .tb-sort span, .tb-view span {
    margin-left: 8px;
}

.tb-chev {
    width: 9px;
    height: 9px;
    margin-left: 4px;
    color: #8a8a8a;
}

.tb-sep {
    width: 1px;
    height: 32px;
    background: #e5e5e5;
}

.tb-icon {
    display: flex;
    justify-content: center;
    width: 48px;
}

.tb-first {
    margin-left: 2px;
}

.tb-last {
    margin-right: 2px;
}

.tb-sort {
    margin-left: 16px;
}

.tb-view {
    margin-left: 28px;
    margin-right: 16px;
}

.tb-dots {
    display: flex;
    gap: 4px;
    margin-left: 16px;
}

.tb-dots i {
    width: 3px;
    height: 3px;
    background: #333;
    border-radius: 50%;
}

.tb-details {
    margin-left: auto;
    margin-right: 22px;
}

.tb-details span {
    margin-left: 8px;
}

/* Body */
.content {
    display: flex;
    flex: 1;
    min-height: 0;
}

.sidebar {
    display: flex;
    flex: none;
    width: 156px;
}

.side-list {
    width: 140px;
    padding-top: 6px;
    box-sizing: border-box;
}

.side-row {
    display: flex;
    align-items: center;
    height: 32px;
    margin: 0 1px 0 2px;
    padding: 0 2px 0 7px;
    border-radius: 4px;
    overflow: hidden;
    white-space: nowrap;
}

.side-row.sub {
    padding-left: 14px;
}

.side-row.sub .chev {
    margin-right: 10px;
}

.side-row.active {
    background: #d9d9d9;
}

.chev {
    display: block;
    flex: none;
    width: 16px;
    height: 16px;
    margin-right: 9px;
    color: #707070;
}

.side-label {
    margin: -2px 0 0 5px;
}

.side-home {
    margin-top: 0;
}

.side-cloud {
    margin: 0 0 0 34px;
}

.pin {
    flex: none;
    width: 13px;
    height: 13px;
    margin-left: auto;
}

.side-sep {
    height: 1px;
    margin: 16px 9px 15px 10px;
    background: #dadada;
}

.side-track {
    width: 16px;
    background: #efefef;
    padding: 17px 0 0 7px;
    box-sizing: border-box;
}

.side-thumb {
    width: 2px;
    height: 655px;
    background: #868686;
    border-radius: 1px;
}

/* File list */
.files {
    flex: 1;
}

.file-head {
    display: grid;
    grid-template-columns: 277px 143px 120px 80px;
    height: 26px;
    padding-bottom: 2px;
    color: #5c5c5c;
}

.file-head > div {
    display: flex;
    align-items: center;
    padding-left: 6px;
    border-right: 1px solid #e5e5e5;
    margin-bottom: -2px;
    padding-bottom: 2px;
}

.file-head > .col-name {
    position: relative;
    padding-left: 34px;
}

.sort-caret {
    position: absolute;
    left: 147px;
    top: 0;
    width: 9px;
    height: 5px;
}

.file-row {
    display: grid;
    grid-template-columns: 264px 144px 120px 70px;
    align-items: center;
    width: 598px;
    height: 24px;
    margin: 4px 0 0 18px;
    border-radius: 2px;
    letter-spacing: .12px;
}

.file-head + .file-row {
    margin-top: 5px;
}

.file-row.selected {
    background: #d9d9d9;
}

.file-name {
    display: flex;
    align-items: center;
    gap: 6px;
    padding-left: 4px;
}

.file-name .ico {
    width: 15px;
    height: 16px;
    margin-right: -1px;
}

.file-meta {
    color: #5c5c5c;
}

.file-size {
    padding-right: 4px;
    text-align: right;
}

/* Status bar */
.statusbar {
    display: flex;
    align-items: center;
    flex: none;
    height: 24px;
    padding: 0 0 2px 14px;
    box-sizing: border-box;
    color: #333;
}

.st-sep {
    width: 1px;
    height: 16px;
    margin: 0 10px;
    background: #e5e5e5;
}

.st-sel {
    margin-right: 8px;
}

.st-views {
    display: flex;
    margin: 0 3px 0 auto;
    align-self: flex-start;
}

.st-view {
    display: flex;
    align-items: center;
    justify-content: center;
    box-sizing: border-box;
    width: 23px;
    height: 23px;
}

.st-view.on {
    background: #e8f2fb;
    border: 2px solid #0a78d4;
}

/* Context menus */
.menu {
    position: absolute;
    box-sizing: border-box;
    background: #f9f9f9;
    border-radius: 8px;
    box-shadow: 0 0 1px rgba(0, 0, 0, .25), 0 4px 12px rgba(0, 0, 0, .2);
    font-size: 13.2px;
    word-spacing: 0;
}

.main-menu {
    left: 297px;
    top: 235px;
    width: 306px;
    height: 412px;
}

.sub-menu {
    left: 597px;
    top: 338px;
    width: 225px;
    height: 197px;
    padding-top: 3px;
}

.sub-menu .m-ico {
    margin-right: 12px;
}

.menu-tools {
    display: flex;
    justify-content: center;
    box-sizing: border-box;
    height: 59px;
    border-bottom: 1px solid #e6e6e6;
}

.menu-tool {
    display: flex;
    flex-direction: column;
    align-items: center;
    gap: 5px;
    width: 60px;
    padding-top: 12px;
    font-size: 12px;
}

.menu-item {
    display: flex;
    align-items: center;
    height: 32px;
    margin: 0 5px;
    padding-left: 10px;
    border-radius: 4px;
    white-space: nowrap;
}

.menu-item.first {
    margin-top: 3px;
}

.menu-item.hover {
    background: #f0f0f0;
}

.m-ico {
    display: block;
    flex: none;
    width: 16px;
    height: 16px;
    margin-right: 11px;
}

.m-chev {
    width: 12px;
    height: 12px;
    margin-left: auto;
    margin-right: 10px;
    color: #666;
}

.m-key {
    width: 77px;
    margin-left: auto;
    font-size: 12px;
    color: #6b6b6b;
}

.menu-sep {
    height: 1px;
    margin: 4px 3px;
    background: #e6e6e6;
}

/* Red annotation boxes */
.mark {
    position: absolute;
    box-sizing: border-box;
    border: 8px solid #fe0000;
}

.mark-open {
    left: 298px;
    top: 338px;
    width: 315px;
    height: 34px;
}

.mark-code {
    left: 596px;
    top: 406px;
    width: 242px;
    height: 38px;
}
```
